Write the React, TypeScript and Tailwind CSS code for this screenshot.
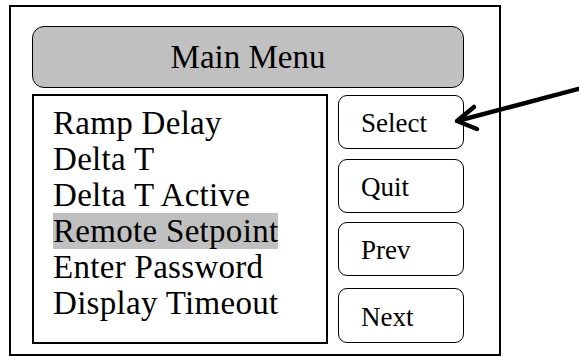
import React from "react";

const serif = { fontFamily: '"Liberation Serif", "DejaVu Serif", serif' };

function Btn({ label, className }: { label: string; className: string }) {
  return (
    <div
      className={`flex h-[54px] w-[126px] items-center rounded-[9px] border-[1.5px] border-black bg-white pl-[22px] text-[27px] text-black ${className}`}
    >
      <span className="pt-[3px]">{label}</span>
    </div>
  );
}

export default function App() {
  const items = [
    "Ramp Delay",
    "Delta T",
    "Delta T Active",
    "Remote Setpoint",
    "Enter Password",
    "Display Timeout",
  ];
  return (
    <div className="relative h-[356px] w-[579px] overflow-hidden bg-white" style={serif}>
      <div className="ml-[9px] mt-[5px] h-[351px] w-[492px] border-2 border-black pl-[21px] pt-[19px]">
        <div className="flex h-[62px] w-[432px] items-center justify-center rounded-[12px] border-[1.5px] border-black bg-[#c0c0c0] text-[33px] text-black">
          <span className="pt-[2px]">Main Menu</span>
        </div>
        <div className="mt-[6px] flex">
          <div className="h-[250px] w-[296px] border-2 border-black pl-[19px] pt-[9px] text-[33px] leading-[36px] tracking-[0.3px] text-black">
            {items.map((t) => (
              <div key={t}>
                {t === "Remote Setpoint" ? <span className="bg-[#c0c0c0]">{t}</span> : t}
              </div>
            ))}
          </div>
          <div className="ml-[10px] flex flex-col">
            <Btn label="Select" className="mt-[1px]" />
            <Btn label="Quit" className="mt-[10px]" />
            <Btn label="Prev" className="mt-[9px]" />
            <Btn label="Next" className="mt-[12px] h-[55px]" />
          </div>
        </div>
      </div>
      <svg className="absolute left-0 top-0" width="579" height="356" viewBox="0 0 579 356">
        <line x1="582" y1="88" x2="461" y2="120" stroke="black" strokeWidth="4.5" strokeLinecap="round" />
        <polyline points="474,107 457,121 477,129" fill="none" stroke="black" strokeWidth="4.5" strokeLinecap="round" strokeLinejoin="round" />
      </svg>
    </div>
  );
}
